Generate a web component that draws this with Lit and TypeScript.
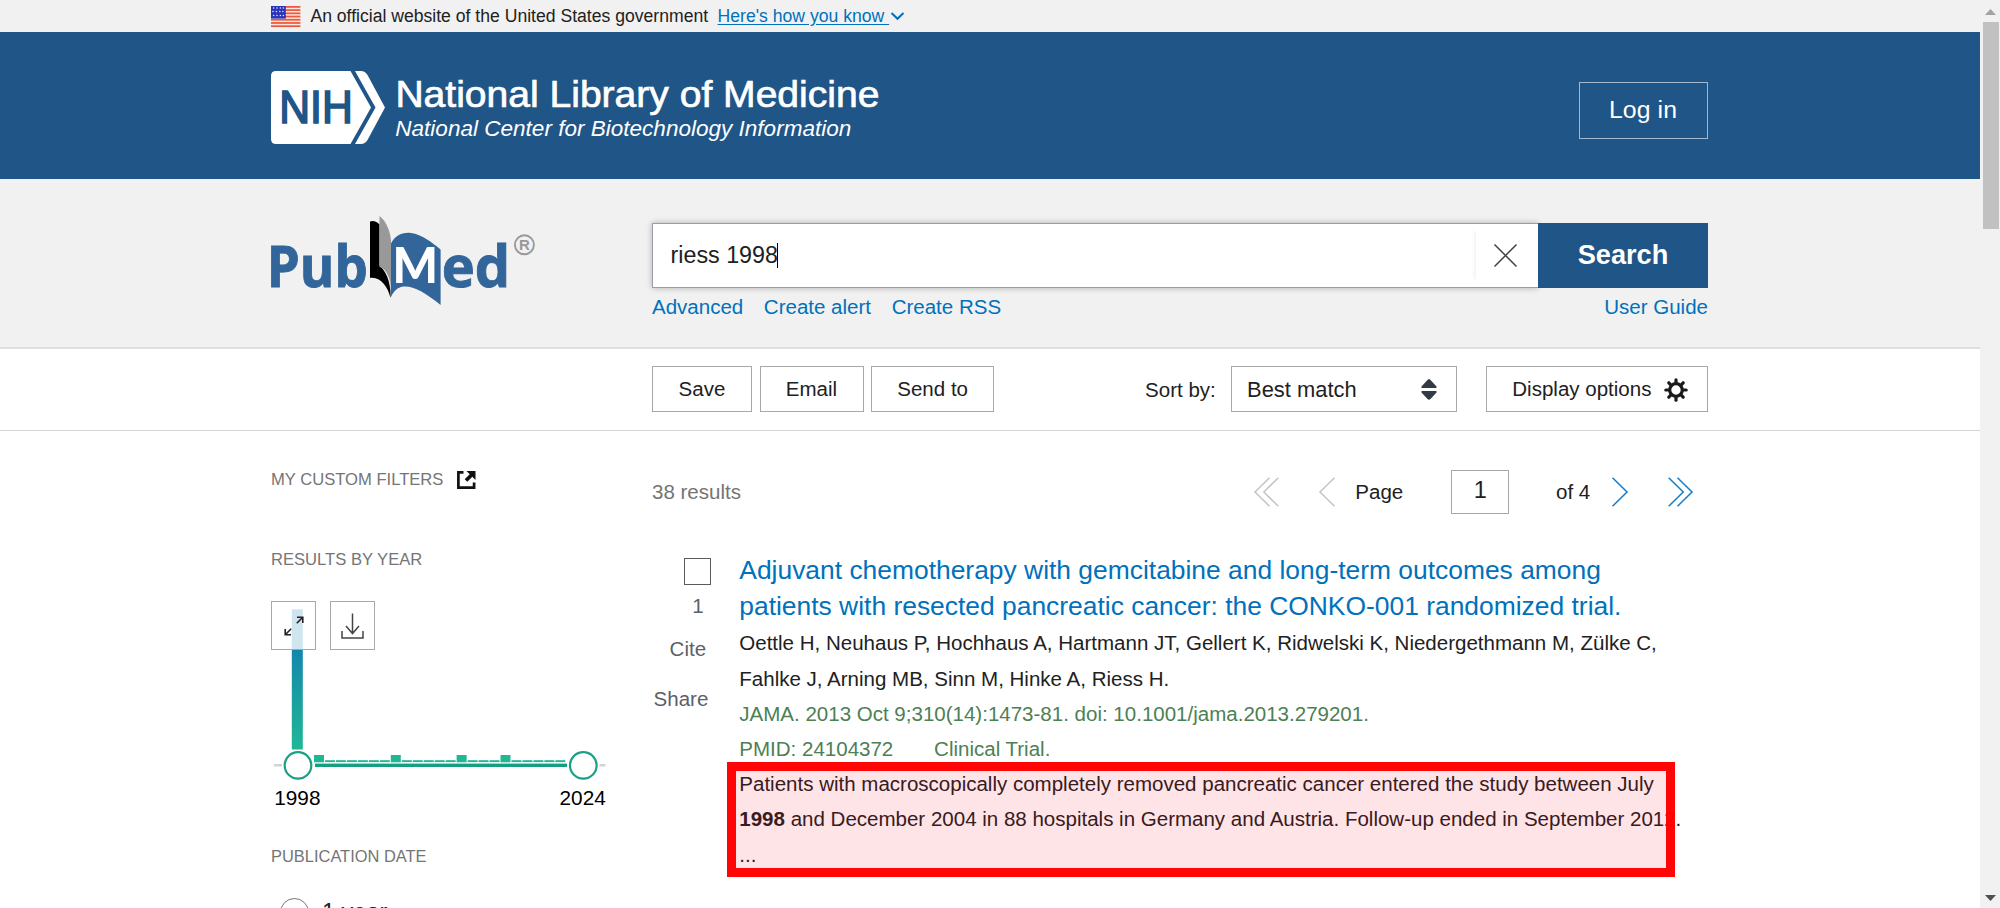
import { LitElement, html, css, svg } from 'lit';
import { customElement } from 'lit/decorators.js';

const STARTS = [1, 8, 14, 18];
const YEARS = Array.from({ length: 26 }, (_, i) => i);

@customElement('app-root')
export class AppRoot extends LitElement {
  static styles = css`
    :host { display: flex; width: 100%; height: 908px; overflow: hidden; background: #fff;
      font-family: "Liberation Sans", Arial, sans-serif; font-size: 20.53px; color: #212121; white-space: nowrap; }
    * { box-sizing: border-box; }
    svg { display: block; overflow: visible; flex: none; }
    .page { width: 1980px; height: 908px; overflow: hidden; display: flex; flex-direction: column; }
    .page > * { flex: none; padding-left: 271px; }
    a { color: #0071bc; text-decoration: none; }

    .banner { height: 32px; background: #f1f1f1; display: flex; align-items: center; font-size: 17.6px; line-height: 32px; }
    .official { margin-left: 10px; }
    .how { margin-left: 9.5px; text-decoration: underline; text-underline-offset: 2px; white-space: pre; }
    .chev { margin-left: 1px; }

    .header { height: 146.5px; background: #205588; display: flex; justify-content: space-between; align-items: center; padding-right: 272px; }
    .brand { margin-top: 5px; }
    .login { width: 129px; height: 57.3px; border: 1px solid #a3b8ce; color: #fff; font-size: 24.8px; letter-spacing: .1px;
      display: flex; align-items: center; justify-content: center; margin-top: 10px; padding-right: 1px; }

    .search { height: 170.5px; background: #f1f1f1; border-bottom: 2px solid #dfdfdf; display: flex; }
    .logo { width: 381px; padding-top: 36px; }
    .searchcol { width: 1056px; padding-top: 44.5px; }
    .bar { display: flex; height: 64.5px; }
    .input { flex: 1; background: #fff; border: 1px solid #9a9ca3; border-right: 0; display: flex; align-items: center;
      box-shadow: 0 0 6px rgba(0,0,0,.28); padding-left: 17.5px; font-size: 23.3px; }
    .query { line-height: 30px; margin-top: -1px; }
    .caret { width: 1px; height: 25px; background: #000; margin-left: -1px; }
    .clear { margin-left: auto; width: 62px; height: 54px; display: flex; align-items: center; justify-content: center; padding-right: 3px;
      box-shadow: -4px 0 4px -3px rgba(0,0,0,.08); }
    .go { width: 170px; background: #205588; color: #fff; font-weight: bold; font-size: 27.2px; display: flex; align-items: center; justify-content: center; }
    .links { display: flex; gap: 20.6px; height: 30px; line-height: 30px; margin-top: 4.5px; }
    .right { margin-left: auto; }

    .tools { height: 81.5px; border-bottom: 1px solid #d6d6d6; padding-left: 652px !important; display: flex; align-items: center; }
    .btn { height: 46px; border: 1px solid #a6a8ae; display: flex; align-items: center; justify-content: center; padding-bottom: 1px; margin-right: 7.5px; }
    .save { width: 100px; } .email { width: 104px; } .send { width: 123.3px; }
    .sort { margin-left: 143.3px; width: 86px; padding-top: 2px; }
    .select { width: 226px; height: 46px; border: 1px solid #a6a8ae; display: flex; align-items: center; justify-content: space-between;
      padding: 1px 19px 0 15px; font-size: 21.9px; margin-right: 29.2px; }
    .display { width: 221.3px; justify-content: space-between; padding: 0 19px 1px 25px; margin-right: 0; }
    .gear { margin-top: 2px; }

    .content { display: flex; }
    .side { width: 381px; padding-top: 39.5px; }
    .head { font-size: 16.6px; color: #757575; height: 20px; line-height: 20px; display: flex; gap: 13.5px; align-items: center; }
    .head.year { margin-top: 59.5px; }
    .chart { position: relative; height: 244px; margin-top: 31.8px; }
    .over { position: absolute; left: 0; top: 0; display: flex; gap: 13.5px; }
    .ico { width: 45.3px; height: 48.5px; border: 1px solid #a6a8ae; background: rgba(255,255,255,.8); display: flex; align-items: center; justify-content: center; }
    .head.pub { margin-top: 1px; font-size: 16.45px; }
    .radio { display: flex; align-items: center; height: 30px; margin-top: 31px; padding-left: 9px; font-size: 23.5px; }
    .dot { width: 29px; height: 29px; border: 1px solid #757575; border-radius: 50%; margin-right: 13px; }

    .main { width: 1056px; padding-top: 39px; }
    .pager { display: flex; align-items: center; height: 44px; }
    .count { color: #757575; width: 601.500px; }
    .p1 { margin-left: 40px; } .ptext { margin-left: 20.8px; width: 95.6px; }
    .pbox { width: 58.6px; height: 44px; border: 1px solid #a6a8ae; font-size: 23.5px; display: flex; align-items: center; justify-content: center; padding-bottom: 2px; }
    .of { margin-left: 46.500px; width: 56px; } .last { margin-left: 40px; }
    .result { display: flex; position: relative; margin-top: 39.8px; }
    .meta { width: 87.3px; color: #5b616b; line-height: 30px; }
    .check { width: 27px; height: 27px; border: 1px solid #5b5b5b; margin: 4.6px 0 6px 32px; }
    .num { width: 92px; text-align: center; }
    .cite { margin-top: 12.8px; margin-left: 17.6px; }
    .share { margin-top: 20px; margin-left: 1.6px; }
    .title { font-size: 26.42px; line-height: 35.2px; color: #0071bc; }
    .lines { line-height: 35.2px; margin-top: 1.7px; }
    .green { color: #4d8055; }
    .trial { margin-left: 40.8px; }
    .mark { position: absolute; left: 75px; top: 209px; width: 948px; height: 115px; border: 9px solid rgba(255,0,0,.98); background: rgba(255,0,30,.105); background-clip: padding-box; }

    .scroll { width: 20px; height: 908px; background: #f1f1f1; display: flex; flex-direction: column; align-items: center; }
    .up { margin-top: 8.5px; }
    .thumb { width: 16px; height: 207px; background: #c1c1c1; margin-top: 7px; margin-left: 1px; }
    .down { margin-top: auto; margin-bottom: 7px; }
  `;

  private flag() {
    return html`<svg width="29.4" height="21" viewBox="0 0 29.4 21">
      <rect width="29.4" height="21" fill="#fbe6e0"/>
      ${[0, 1, 2, 3, 4, 5, 6].map(i => svg`<rect y=${i * 3.22} width="29.4" height="1.75" fill="#ea5a3e"/>`)}
      <rect width="14.8" height="12.6" fill="#2b35b8"/>
      ${[2, 5.6, 9.4].map((y, r) => [2.6, 6, 9.4, 12.4].map(x => svg`<circle cx=${x - (r % 2) * .6} cy=${y} r=".75" fill="#e6e8ff"/>`))}
    </svg>`;
  }

  private nih() {
    return html`<svg class="brand" width="620" height="74" viewBox="0 0 620 74">
      <path d="M5 0H79.500L100 36.5L79.500 73H5Q0 73 0 68V5Q0 0 5 0Z" fill="#fff"/>
      <path d="M84 0H90Q94 0 96.500 4L114 36.5L96.500 69Q94 73 90 73H84L104.500 36.5Z" fill="#fff"/>
      <text x="8.3" y="52.3" font-size="46.5" textLength="73.5" lengthAdjust="spacingAndGlyphs" fill="#205588" stroke="#205588" stroke-width="1.7">NIH</text>
      <text x="124.4" y="35.8" font-size="36.8" textLength="484" lengthAdjust="spacingAndGlyphs" fill="#fff" stroke="#fff" stroke-width=".7">National Library of Medicine</text>
      <text x="124.3" y="64.7" font-size="22.4" font-style="italic" textLength="456" lengthAdjust="spacingAndGlyphs" fill="#fff">National Center for Biotechnology Information</text>
    </svg>`;
  }

  private pubmed() {
    return html`<svg width="270" height="92" viewBox="271 214.500 270 92">
      <g font-family="Open Sans, sans-serif" font-weight="700" fill="#326599" stroke="#326599" stroke-width=".9">
        <text x="266.8" y="286.4" font-size="58" textLength="101" lengthAdjust="spacingAndGlyphs">Pub</text>
        <text x="441.8" y="286.4" font-size="58" textLength="68.5" lengthAdjust="spacingAndGlyphs">ed</text>
      </g>
      <path d="M391 243C395 235 402 231.5 411 232.5C422 234 432 242 440.6 249V304.5C424 291 411 284 401 286.5C396 288 393 292 390.7 297Z" fill="#326599"/>
      <path d="M370 221C373 219.500 377 221 379.500 224V265C386 271 391 281 390.500 297.500C388 287 381 276 370 277.500Z" fill="#000"/>
      <path d="M379.500 215.500C387 221 392 234 391 246V285C389 274 385 268 379.500 266.500Z" fill="#999"/>
      <text x="392.5" y="282" font-family="Lato, sans-serif" font-weight="900" font-size="48.5" textLength="45.5" lengthAdjust="spacingAndGlyphs" fill="#fff">M</text>
      <circle cx="524.4" cy="244.300" r="9.500" fill="none" stroke="#999" stroke-width="1.900"/>
      <text x="519.100" y="249.800" font-size="15" font-weight="bold" fill="#999">R</text>
    </svg>`;
  }

  private chart() {
    return html`<svg width="348" height="220" viewBox="271 601 348 220">
      <defs><linearGradient id="g" x1="0" y1="0" x2="0" y2="1"><stop offset="0" stop-color="#0e76ae"/><stop offset=".3" stop-color="#1487ac"/><stop offset="1" stop-color="#20b795"/></linearGradient></defs>
      <rect x="291.8" y="609.3" width="11" height="140.200" fill="url(#g)"/>
      ${YEARS.map(i => {
        const big = STARTS.includes(i + 1);
        return svg`<rect x=${314 + i * 10.97} y=${big ? 755 : 760.2} width=${i > 22 ? 0 : 10} height=${big ? 7.300 : 1.900} fill="#20b795"/>`;
      })}
      <path d="M274 765.3H282M599.500 765.3H605.500" stroke="#d4d4d4" stroke-width="2.500"/>
      <rect x="315" y="763.6" width="252" height="3.400" fill="#159f80"/>
      <g fill="#fff" stroke="#1ba085" stroke-width="2.200"><circle cx="298" cy="765.400" r="13.300"/><circle cx="583.3" cy="765.400" r="13.300"/></g>
      <text x="274.200" y="805" font-size="20.8" fill="#000">1998</text>
      <text x="559.500" y="805" font-size="20.8" fill="#000">2024</text>
    </svg>`;
  }

  private gear() {
    return html`<svg class="gear" width="24" height="24" viewBox="-12 -12 24 24">
      <circle r="6.300" fill="none" stroke="#1a1a1a" stroke-width="3.200"/>
      ${[0, 45, 90, 135, 180, 225, 270, 315].map(a => svg`<path transform="rotate(${a})" d="M0 -7V-10.200" stroke="#1a1a1a" stroke-width="3.200" stroke-linecap="round"/>`)}
    </svg>`;
  }

  render() {
    return html`
      <div class="page">
        <div class="banner">${this.flag()}<span class="official">An official website of the United States government</span>
          <a class="how">Here's how you know </a>
          <svg class="chev" width="15" height="10" viewBox="0 0 15 10"><path d="M1.500 2L7.500 7.800L13.500 2" fill="none" stroke="#0071bc" stroke-width="2"/></svg>
        </div>
        <div class="header">${this.nih()}<div class="login">Log in</div></div>
        <div class="search">
          <div class="logo">${this.pubmed()}</div>
          <div class="searchcol">
            <div class="bar">
              <div class="input"><span class="query">riess 1998</span><span class="caret"></span>
                <div class="clear"><svg width="23" height="23" viewBox="0 0 23 23"><path d="M.5 .5L22.500 22.500M22.500 .5L.5 22.500" stroke="#444" stroke-width="1.500"/></svg></div>
              </div>
              <div class="go">Search</div>
            </div>
            <div class="links"><a>Advanced</a><a>Create alert</a><a>Create RSS</a><a class="right">User Guide</a></div>
          </div>
        </div>
        <div class="tools">
          <div class="btn save">Save</div><div class="btn email">Email</div><div class="btn send">Send to</div>
          <div class="sort">Sort by:</div>
          <div class="select">Best match<svg width="16" height="21" viewBox="0 0 16 21"><path d="M8 0Q8.500 0 9.500 1L15.500 7.500V9H.5V7.500L6.500 1Q7.500 0 8 0ZM.5 12H15.500V13.500L9.500 20Q8 21.500 6.500 20L.5 13.500Z" fill="#323a45"/></svg></div>
          <div class="btn display">Display options${this.gear()}</div>
        </div>
        <div class="content">
          <div class="side">
            <div class="head">MY CUSTOM FILTERS
              <svg width="18.500" height="18" viewBox="0 0 18.500 18"><path d="M6.500 1.300H1.400V16.600H17.100V11.500" fill="none" stroke="#111" stroke-width="2.700"/><path d="M9.500 0H18.500V9L15.300 5.800L10.300 10.800L7.700 8.200L12.700 3.200Z" fill="#111"/></svg>
            </div>
            <div class="head year">RESULTS BY YEAR</div>
            <div class="chart">${this.chart()}
              <div class="over">
                <div class="ico"><svg width="20" height="20" viewBox="0 0 20 20"><path d="M12.800 7.200L18.500 1.500M13 1.200H18.800V7M7.200 12.800L1.500 18.500M7 18.800H1.200V13" fill="none" stroke="#222" stroke-width="1.600"/></svg></div>
                <div class="ico"><svg width="23" height="26" viewBox="0 0 23 26"><path d="M11.500 .5V20.500M5 13L11.500 20.500L18 13M1 18V25H22V18" fill="none" stroke="#444" stroke-width="1.500"/></svg></div>
              </div>
            </div>
            <div class="head pub">PUBLICATION DATE</div>
            <div class="radio"><span class="dot"></span>1 year</div>
          </div>
          <div class="main">
            <div class="pager">
              <span class="count">38 results</span>
              <svg width="25" height="30" viewBox="0 0 25 30"><path d="M15.500 .7L1 15L15.500 29.300M24.300 .7L9.800 15L24.300 29.300" fill="none" stroke="#c4c4c4" stroke-width="1.500"/></svg>
              <svg class="p1" width="16" height="30" viewBox="0 0 16 30"><path d="M15.500 .7L1 15L15.500 29.300" fill="none" stroke="#c4c4c4" stroke-width="1.500"/></svg>
              <span class="ptext">Page</span><span class="pbox">1</span><span class="of">of 4</span>
              <svg width="16" height="30" viewBox="0 0 16 30"><path d="M.5 .7L15 15L.5 29.300" fill="none" stroke="#1c80c8" stroke-width="1.600"/></svg>
              <svg class="last" width="25" height="30" viewBox="0 0 25 30"><path d="M.7 .7L15.200 15L.7 29.300M9.500 .7L24 15L9.500 29.300" fill="none" stroke="#1c80c8" stroke-width="1.600"/></svg>
            </div>
            <div class="result">
              <div class="meta"><div class="check"></div><div class="num">1</div><div class="cite">Cite</div><div class="share">Share</div></div>
              <div>
                <div class="title">Adjuvant chemotherapy with gemcitabine and long-term outcomes among<br>patients with resected pancreatic cancer: the CONKO-001 randomized trial.</div>
                <div class="lines">
                  <div>Oettle H, Neuhaus P, Hochhaus A, Hartmann JT, Gellert K, Ridwelski K, Niedergethmann M, Zülke C,<br>Fahlke J, Arning MB, Sinn M, Hinke A, Riess H.</div>
                  <div class="green">JAMA. 2013 Oct 9;310(14):1473-81. doi: 10.1001/jama.2013.279201.<br>PMID: 24104372<span class="trial">Clinical Trial.</span></div>
                  <div>Patients with macroscopically completely removed pancreatic cancer entered the study between July<br><b>1998</b> and December 2004 in 88 hospitals in Germany and Austria. Follow-up ended in September 2012.<br>...</div>
                </div>
              </div>
              <div class="mark"></div>
            </div>
          </div>
        </div>
      </div>
      <div class="scroll">
        <svg class="up" width="11" height="6" viewBox="0 0 11 6"><path d="M0 6L5.500 0L11 6Z" fill="#a3a3a3"/></svg>
        <div class="thumb"></div>
        <svg class="down" width="11" height="6" viewBox="0 0 11 6"><path d="M0 0L5.500 6L11 0Z" fill="#505050"/></svg>
      </div>`;
  }
}
